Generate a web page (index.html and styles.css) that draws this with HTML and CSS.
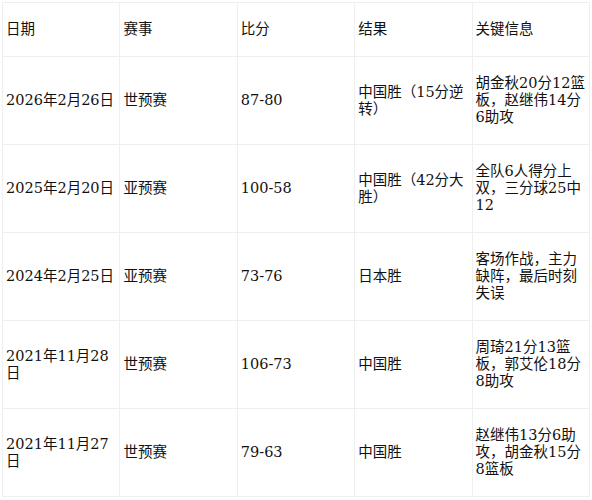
FILE: index.html
```html
<!DOCTYPE html>
<html lang="zh-CN">
<head>
<meta charset="utf-8">
<link rel="stylesheet" href="styles.css">
</head>
<body>
<table class="results">
  <thead>
    <tr><th>日期</th><th>赛事</th><th>比分</th><th>结果</th><th>关键信息</th></tr>
  </thead>
  <tbody>
    <tr><td>2026年2月26日</td><td>世预赛</td><td>87-80</td><td>中国胜（15分逆转）</td><td>胡金秋20分12篮板，赵继伟14分6助攻</td></tr>
    <tr><td>2025年2月20日</td><td>亚预赛</td><td>100-58</td><td>中国胜（42分大胜）</td><td>全队6人得分上双，三分球25中12</td></tr>
    <tr><td>2024年2月25日</td><td>亚预赛</td><td>73-76</td><td>日本胜</td><td>客场作战，主力缺阵，最后时刻失误</td></tr>
    <tr><td>2021年11月28日</td><td>世预赛</td><td>106-73</td><td>中国胜</td><td>周琦21分13篮板，郭艾伦18分8助攻</td></tr>
    <tr><td>2021年11月27日</td><td>世预赛</td><td>79-63</td><td>中国胜</td><td>赵继伟13分6助攻，胡金秋15分8篮板</td></tr>
  </tbody>
</table>
</body>
</html>
```
FILE: styles.css
```css
html, body {
  margin: 0;
  padding: 0;
  background: #ffffff;
}
.results {
  margin: 2px;
  width: 588px;
  border-collapse: collapse;
  table-layout: fixed;
  font-family: "DejaVu Serif", "Noto Sans CJK SC", serif;
  font-size: 14.5px;
  line-height: 17px;
  color: #111111;
}
.results th,
.results td {
  border: 1px solid #efefef;
  padding: 18px 3px 18px 3px;
  text-align: left;
  vertical-align: middle;
  font-weight: normal;
}
.results thead th {
  padding-top: 18px;
  padding-bottom: 18px;
}
```
